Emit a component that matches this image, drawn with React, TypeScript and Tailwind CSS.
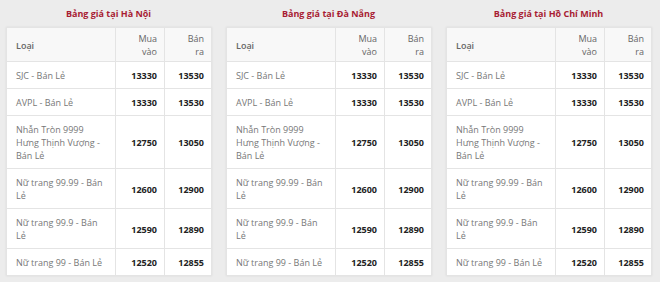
import React from 'react';

interface IPriceRow {
  name: string;
  buy: string;
  sell: string;
}

const rows: IPriceRow[] = [
  { name: 'SJC - Bán Lẻ', buy: '13330', sell: '13530' },
  { name: 'AVPL - Bán Lẻ', buy: '13330', sell: '13530' },
  { name: 'Nhẫn Tròn 9999 Hưng Thịnh Vượng - Bán Lẻ', buy: '12750', sell: '13050' },
  { name: 'Nữ trang 99.99 - Bán Lẻ', buy: '12600', sell: '12900' },
  { name: 'Nữ trang 99.9 - Bán Lẻ', buy: '12590', sell: '12890' },
  { name: 'Nữ trang 99 - Bán Lẻ', buy: '12520', sell: '12855' },
];

const cities = ['Hà Nội', 'Đà Nẵng', 'Hồ Chí Minh'];

const PriceTable: React.FC<{ city: string }> = ({ city }) => {
  return (
    <div className="w-[205px] shrink-0">
      <h3 className="h-[27px] flex items-center justify-center text-[9px] font-bold text-[#a81c33]">
        Bảng giá tại {city}
      </h3>
      <table className="w-full table-fixed border-collapse bg-white text-[9px] leading-[13px] shadow-[0_0_2px_rgba(0,0,0,0.08)]">
        <colgroup>
          <col className="w-[109px]" />
          <col className="w-[49px]" />
          <col className="w-[47px]" />
        </colgroup>
        <thead>
          <tr className="bg-[#f8f8f8] text-[#666]">
            <th className="border border-[#e4e4e4] px-[9px] pt-[4px] pb-[3px] text-left font-semibold align-middle">
              Loại
            </th>
            <th className="border border-[#e4e4e4] px-[7px] pt-[4px] pb-[3px] text-right font-normal align-middle">
              Mua
              <br />
              vào
            </th>
            <th className="border border-[#e4e4e4] px-[7px] pt-[4px] pb-[3px] text-right font-normal align-middle">
              Bán
              <br />
              ra
            </th>
          </tr>
        </thead>
        <tbody>
          {rows.map((row) => (
            <tr key={row.name}>
              <td className="border border-[#e4e4e4] px-[9px] pt-[7px] pb-[6px] text-[#777] align-middle">
                {row.name}
              </td>
              <td className="border border-[#e4e4e4] px-[7px] pt-[7px] pb-[6px] text-right font-bold text-[#222] align-middle">
                {row.buy}
              </td>
              <td className="border border-[#e4e4e4] px-[7px] pt-[7px] pb-[6px] text-right font-bold text-[#222] align-middle">
                {row.sell}
              </td>
            </tr>
          ))}
        </tbody>
      </table>
    </div>
  );
};

const App: React.FC = () => {
  return (
    <div
      className="w-[660px] h-[282px] overflow-hidden bg-[#ececec] flex gap-[15px] px-[6px]"
      style={{ fontFamily: '"Open Sans", "Noto Sans", sans-serif' }}
    >
      {cities.map((city) => (
        <PriceTable key={city} city={city} />
      ))}
    </div>
  );
};

export default App;
